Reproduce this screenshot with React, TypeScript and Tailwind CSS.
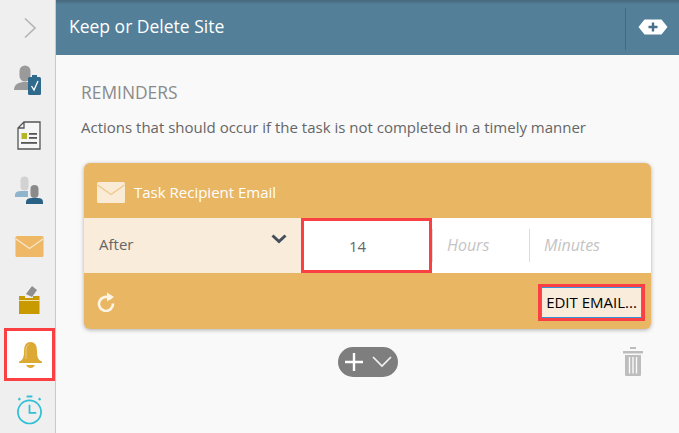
import React from "react";

const Row = ({ children, boxed }: { children: React.ReactNode; boxed?: boolean }) => (
  <div className={boxed ? "h-[53px] shrink-0 ml-1 mt-[-2px] mb-[4px] border-[3px] border-[#fb4044] bg-white flex items-center justify-center pl-[2px]" : "h-[55px] shrink-0 pl-[3px] flex items-center justify-center"}>
    {children}
  </div>
);

function Envelope({ w, h, fill, line }: { w: number; h: number; fill: string; line: string }) {
  return (
    <svg width={w} height={h} viewBox="0 0 28 21">
      <rect x="0" y="0" width="28" height="21" rx="1.5" fill={fill} />
      <path d="M0.5 3 L14 12.5 L27.5 3" fill="none" stroke={line} strokeWidth="1.4" />
    </svg>
  );
}

export default function App() {
  return (
    <div className="w-[679px] h-[433px] overflow-hidden flex bg-[#f9f9f9] text-[#555] relative" style={{ fontFamily: '"Open Sans", "Noto Sans", sans-serif' }}>
      <div className="w-[56px] shrink-0 bg-[#efefef] border-r border-r-[#c9c9c9] flex flex-col">
        <Row>
          <svg width="14" height="22" viewBox="0 0 14 22" className="ml-[1px]"><path d="M2 1.5 L12 11 L2 20.5" fill="none" stroke="#b5b5b5" strokeWidth="1.7" /></svg>
        </Row>
        <Row>
          <svg width="30" height="31" viewBox="0 0 30 31" className="mt-[-4px] ml-[-3px]">
            <rect x="6.5" y="0.5" width="11" height="16" rx="5.5" fill="#9a9a9a" />
            <path d="M1 25 C1 19 6 17 12 17 L16 17 L16 25 Z" fill="#9a9a9a" />
            <rect x="15" y="12" width="13" height="18" rx="1.5" fill="#2f6a8c" />
            <rect x="19" y="10" width="5" height="4" fill="#2f6a8c" />
            <path d="M18.5 21 L21 25 L25 16" fill="none" stroke="#fff" strokeWidth="1.3" />
          </svg>
        </Row>
        <Row>
          <svg width="24" height="29" viewBox="0 0 24 29" className="mt-[-5px]">
            <path d="M7 1 L23 1 L23 28 L1 28 L1 7 Z M7 1 L7 7 L1 7" fill="#f6f6f6" stroke="#555" strokeWidth="1.3" />
            <rect x="4.5" y="12" width="5.5" height="6" fill="#b5b52a" />
            <rect x="12" y="12" width="8" height="1.8" fill="#555" />
            <rect x="12" y="16" width="8" height="1.8" fill="#555" />
            <rect x="4" y="21" width="16" height="1.8" fill="#555" />
          </svg>
        </Row>
        <Row>
          <svg width="30" height="29" viewBox="0 0 30 29" className="mt-[-5px]">
            <rect x="6.5" y="0.5" width="8" height="14" rx="4" fill="#d2d2d2" />
            <path d="M1 19 Q1 15 7 15 L14 15 L14 21 L1 21 Z" fill="#8fb5cc" />
            <rect x="16.5" y="9" width="8" height="13" rx="4" fill="#8a8a8a" />
            <path d="M12 28 L12 26 Q12 22 18 22 L24 22 Q29 22 29 26 L29 28 Z" fill="#2a6286" />
          </svg>
        </Row>
        <Row>
          <div className="mt-[-3px]"><Envelope w={29} h={21} fill="#eeb866" line="#f8e6c8" /></div>
        </Row>
        <Row>
          <svg width="21" height="29" viewBox="0 0 21 29" className="mt-[-6px]">
            <path d="M7 9 L13 1 L18 5 L13 12 Z" fill="#8f8f8f" />
            <path d="M0 11 L6 11 L6 13 L14 13 L14 11 L20.5 11 L20.5 29 L0 29 Z" fill="#c99a00" />
            <rect x="0" y="15" width="20.5" height="1" fill="#f1e3a8" />
          </svg>
        </Row>
        <Row boxed>
          <svg width="25" height="29" viewBox="0 0 25 29">
            <path d="M1 21.5 Q3 21 4.5 19 Q6 17 6 11 Q6 2 12.5 2 Q19 2 19 11 Q19 17 20.5 19 Q22 21 24 21.5 L24 23 L1 23 Z" fill="#dcaa33" />
            <path d="M8 19 L8 10 Q8 6 10.5 4.5" fill="none" stroke="#f0d79a" strokeWidth="0.8" />
            <path d="M8 25 L17 25 Q15.5 28 12.5 28 Q9.5 28 8 25 Z" fill="#dcaa33" />
          </svg>
        </Row>
        <Row>
          <svg width="27" height="30" viewBox="0 0 28 31" className="mt-[-6px]">
            <circle cx="14" cy="17.5" r="12" fill="none" stroke="#2fc0d6" strokeWidth="1.8" />
            <path d="M14 10 L14 18.5 L21 18.5" fill="none" stroke="#2fc0d6" strokeWidth="1.8" />
            <rect x="11" y="0.5" width="6" height="2" fill="#2fc0d6" />
            <path d="M2.5 5 L4.5 3.5 M25.5 5 L23.5 3.5" stroke="#2fc0d6" strokeWidth="2.2" />
          </svg>
        </Row>
      </div>

      <div className="flex-1 flex flex-col min-w-0">
        <div className="h-[55px] shrink-0 bg-[#537f99] bg-gradient-to-b from-[#47677b] from-0% to-[#537f99] to-[8%] flex items-center pl-[13px] text-white">
          <div className="flex-1 text-[17.5px] pb-[3px] font-normal text-white">Keep or Delete Site</div>
          <div className="w-[54px] h-[42px] mt-[2px] border-l border-l-[#3f6a85] flex items-center justify-center">
            <svg width="30" height="16" viewBox="0 0 30 16" className="mt-[-3px] ml-[1px]">
              <path d="M6.5 0.5 L23.5 0.5 L29.5 8 L23.5 15.5 L6.5 15.5 L0.5 8 Z" fill="#fff" />
              <path d="M15 3.5 L15 12.5 M10.5 8 L19.5 8" stroke="#47708b" strokeWidth="2.4" />
            </svg>
          </div>
        </div>

        <div className="flex-1 pl-[25px] pt-[25px]">
          <div className="text-[17.4px] leading-[24px] text-[#8a8a8a]">REMINDERS</div>
          <div className="text-[15px] leading-[20px] mt-[13px] text-[#666]">Actions that should occur if the task is not completed in a timely manner</div>

          <div className="w-[567px] ml-[3px] mt-[26px] rounded-md bg-[#e9b664] shadow-[0_1px_4px_rgba(0,0,0,0.3)]">
            <div className="h-[55px] flex items-center pl-[13px] gap-[9px] pt-[3px]">
              <Envelope w={28} h={21} fill="#f9ebd6" line="#eec88c" />
              <span className="text-[15px] text-white font-normal">Task Recipient Email</span>
            </div>
            <div className="h-[55px] flex bg-white">
              <div className="w-[217px] bg-[#f9ecdb] flex items-start pl-[15px] pr-[14px] pt-[16px] justify-between">
                <span className="text-[15px] leading-[20px] text-[#666]">After</span>
                <svg width="16" height="10" viewBox="0 0 16 10">
                  <path d="M1.5 1.5 L8 7.5 L14.5 1.5" fill="none" stroke="#454f5c" strokeWidth="3" />
                </svg>
              </div>
              <div className="w-[131px] h-[55px] border-[3px] border-[#fb4044] bg-white flex items-center pl-[45px] pt-[2px] text-[15px] text-[#666]">14</div>
              <div className="flex items-center">
                <div className="w-[97px] h-[33px] border-l border-l-[#dcdcdc] pl-[14px] italic text-[16px] leading-[33px] text-[#c4c4c4]">Hours</div>
                <div className="h-[33px] border-l border-l-[#dcdcdc] pl-[14px] italic text-[16px] leading-[33px] text-[#c4c4c4]">Minutes</div>
              </div>
            </div>
            <div className="h-[56px] flex items-center justify-between pl-[13px] pr-[6px]">
              <svg width="18" height="20" viewBox="0 0 18 20" className="mt-[1px]">
                <path d="M14 7 A7 7 0 1 0 16 11.5" fill="none" stroke="#fdf4e6" strokeWidth="2.6" />
                <path d="M10 0.5 L17 5 L10 9.5 Z" fill="#fdf4e6" />
              </svg>
              <div className="w-[107px] h-[37px] border-[3px] border-[#fb4044] flex mt-[3px]">
                <div className="flex-1 bg-[#f9ecdb] border border-[#3a93d8] flex items-center justify-center text-[15px] text-black whitespace-nowrap">EDIT EMAIL...</div>
              </div>
            </div>
          </div>

          <div className="w-[567px] ml-[3px] mt-[18px] flex items-start relative h-[40px]">
            <div className="ml-[254px] w-[60px] h-[30px] rounded-full bg-[#7e7e7e] flex items-center pl-[6px] gap-[8px]">
              <svg width="20" height="20" viewBox="0 0 20 20"><path d="M10 1 L10 19 M1 10 L19 10" stroke="#fff" strokeWidth="2.4" /></svg>
              <svg width="20" height="12" viewBox="0 0 20 12"><path d="M1 1 L10 10 L19 1" fill="none" stroke="#f2f2f2" strokeWidth="1.7" /></svg>
            </div>
            <svg width="20" height="30" viewBox="0 0 20 30" className="ml-auto mr-[8px]">
              <rect x="7" y="0" width="6" height="2" fill="#bdbdbd" />
              <rect x="0" y="4" width="20" height="2.5" fill="#bdbdbd" />
              <path d="M2 8 L18 8 L18 28 Q18 29 17 29 L3 29 Q2 29 2 28 Z" fill="#bdbdbd" />
              <path d="M6.5 10 L6.5 26.5 M10 10 L10 26.5 M13.5 10 L13.5 26.5" stroke="#f9f9f9" strokeWidth="1.4" />
            </svg>
          </div>
        </div>
      </div>
    </div>
  );
}
